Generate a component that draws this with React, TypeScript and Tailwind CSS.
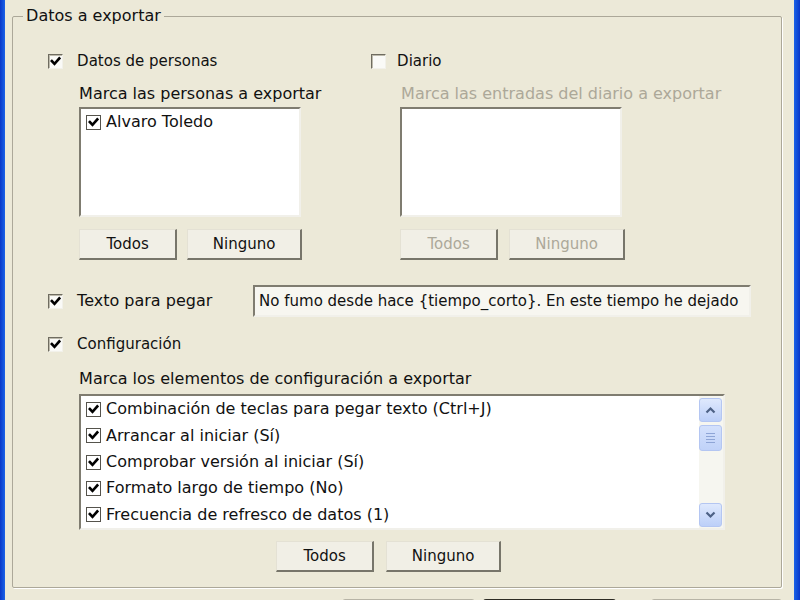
import React from 'react';

const FONT = { fontFamily: '"DejaVu Sans", "Liberation Sans", sans-serif' };

const Tick = () => (
  <svg width="11" height="11" viewBox="0 0 11 11">
    <path d="M1.8 5 L4.5 7.9 L9.3 2.4" stroke="#000" strokeWidth="2.6" fill="none" strokeLinecap="square" />
  </svg>
);

const CheckBox = ({ checked }: { checked?: boolean }) => (
  <span className="w-[15px] h-[15px] shrink-0 flex items-center justify-center bg-[#fafaf7] border border-t-[#6f6c60] border-l-[#6f6c60] border-r-[#f2f1ea] border-b-[#f2f1ea] shadow-[inset_1px_1px_0_#bdbaac]">
    {checked && <Tick />}
  </span>
);

const ItemBox = () => (
  <span className="w-[15px] h-[15px] shrink-0 flex items-center justify-center bg-white border border-[#55534c]">
    <Tick />
  </span>
);

const Button = ({ label, w, disabled }: { label: string; w: string; disabled?: boolean }) => (
  <button
    className={`${w} h-[31px] flex items-center justify-center bg-[#f1efe6] border-t border-l border-t-[#e4e1d4] border-l-[#e4e1d4] border-r-2 border-b-2 border-r-[#77756a] border-b-[#77756a] text-[15px] ${disabled ? 'text-[#aca899]' : 'text-[#111]'}`}
  >
    {label}
  </button>
);

const ListBox = ({ className, children }: { className: string; children?: React.ReactNode }) => (
  <div className={`${className} bg-white border-2 border-t-[#7f7c70] border-l-[#7f7c70] border-r-[#f1f0ea] border-b-[#f1f0ea]`}>
    {children}
  </div>
);

const configItems = [
  'Combinación de teclas para pegar texto (Ctrl+J)',
  'Arrancar al iniciar (Sí)',
  'Comprobar versión al iniciar (Sí)',
  'Formato largo de tiempo (No)',
  'Frecuencia de refresco de datos (1)',
];

const ScrollBtn = ({ up }: { up?: boolean }) => (
  <div className="w-[23px] h-[24px] rounded-[3px] bg-gradient-to-b from-[#dfe9fd] to-[#bccff8] border border-[#b4c6f2] flex items-center justify-center">
    <svg width="11" height="8" viewBox="0 0 11 8">
      <path d={up ? 'M1.5 6.5 L5.5 2.5 L9.5 6.5' : 'M1.5 1.5 L5.5 5.5 L9.5 1.5'} stroke="#4d6185" strokeWidth="2.2" fill="none" />
    </svg>
  </div>
);

export default function App() {
  return (
    <div className="w-[800px] h-[600px] bg-[#ece9d8] flex overflow-hidden text-[#111]" style={FONT}>
      <div className="w-[6px] h-full bg-gradient-to-r from-[#0a36c8] to-[#1c62e8]" />
      <div className="flex-1 flex flex-col pl-[7px] pr-[12px] pt-[6px]">
        <fieldset className="border border-[#aca899] rounded-[2px] shadow-[1px_1px_0_#fff]">
          <legend className="ml-[10px] px-[3px] text-[16px] leading-[20px] bg-[#ece9d8]">Datos a exportar</legend>

          <div className="pl-[35px] pr-[20px] pb-[15px]">
            <div className="flex mt-[25px]">
              <div className="w-[323px] flex flex-col">
                <div className="h-[20px] flex items-center gap-[14px] text-[15px]">
                  <CheckBox checked />
                  <span>Datos de personas</span>
                </div>
                <div className="ml-[31px] mt-[13px] text-[16px] leading-[20px]">Marca las personas a exportar</div>
                <ListBox className="ml-[31px] mt-[3px] w-[222px] h-[110px] pt-[3px] pl-[5px]">
                  <div className="h-[20px] flex items-center gap-[5px] text-[16px]">
                    <ItemBox />
                    <span>Alvaro Toledo</span>
                  </div>
                </ListBox>
                <div className="ml-[31px] mt-[12px] flex gap-[10px]">
                  <Button label="Todos" w="w-[98px]" />
                  <Button label="Ninguno" w="w-[115px]" />
                </div>
              </div>
              <div className="flex flex-col">
                <div className="h-[20px] flex items-center gap-[11px] text-[15px]">
                  <CheckBox />
                  <span>Diario</span>
                </div>
                <div className="ml-[30px] mt-[13px] text-[16px] leading-[20px] text-[#aca899]">
                  Marca las entradas del diario a exportar
                </div>
                <ListBox className="ml-[29px] mt-[3px] w-[222px] h-[110px]" />
                <div className="ml-[29px] mt-[12px] flex gap-[11px]">
                  <Button label="Todos" w="w-[98px]" disabled />
                  <Button label="Ninguno" w="w-[116px]" disabled />
                </div>
              </div>
            </div>

            <div className="flex items-center mt-[25px]">
              <div className="w-[205px] flex items-center gap-[14px] text-[16px]">
                <CheckBox checked />
                <span>Texto para pegar</span>
              </div>
              <div className="w-[498px] h-[32px] flex items-center pl-[4px] bg-[#f7f6f0] border-2 border-t-[#7f7c70] border-l-[#7f7c70] border-r-[#f1f0ea] border-b-[#f1f0ea] text-[15px] whitespace-nowrap overflow-hidden">
                No fumo desde hace {'{tiempo_corto}'}. En este tiempo he dejado
              </div>
            </div>

            <div className="h-[20px] mt-[17px] flex items-center gap-[14px] text-[15px]">
              <CheckBox checked />
              <span>Configuración</span>
            </div>
            <div className="ml-[31px] mt-[15px] text-[16px] leading-[20px]">Marca los elementos de configuración a exportar</div>
            <ListBox className="ml-[31px] mt-[5px] w-[646px] h-[136px] flex">
              <div className="flex-1 pl-[5px] flex flex-col">
                {configItems.map((t) => (
                  <div key={t} className="h-[26.5px] flex items-center gap-[5px] text-[16px] whitespace-nowrap">
                    <ItemBox />
                    <span>{t}</span>
                  </div>
                ))}
              </div>
              <div className="w-[24px] h-full flex flex-col justify-between bg-[#f6f6f0] pt-[2px] pb-[1px]">
                <ScrollBtn up />
                <div className="flex-1 pt-[3px]">
                  <div className="w-[23px] h-[26px] rounded-[3px] bg-gradient-to-b from-[#d4e1fc] to-[#c0d2f8] border border-[#b4c6f2] flex flex-col items-center justify-center gap-[2px]">
                    <span className="w-[9px] h-[1px] bg-[#8ea5d6]" />
                    <span className="w-[9px] h-[1px] bg-[#8ea5d6]" />
                    <span className="w-[9px] h-[1px] bg-[#8ea5d6]" />
                    <span className="w-[9px] h-[1px] bg-[#8ea5d6]" />
                  </div>
                </div>
                <ScrollBtn />
              </div>
            </ListBox>
            <div className="ml-[228px] mt-[11px] flex gap-[12px]">
              <Button label="Todos" w="w-[98px]" />
              <Button label="Ninguno" w="w-[115px]" />
            </div>
          </div>
        </fieldset>

        <div className="flex mt-[11px]">
          <div className="ml-[330px] w-[133px] h-[30px] bg-[#f7f6f1] border border-[#b7b4a6] rounded-[3px]" />
          <div className="ml-[8px] w-[133px] h-[30px] bg-[#2d2b24] rounded-[3px]" />
          <div className="ml-[35px] w-[131px] h-[30px] bg-[#f7f6f1] border border-[#b7b4a6] rounded-[3px]" />
        </div>
      </div>
      <div className="w-[7px] h-full bg-gradient-to-r from-[#1c62e8] to-[#0a36c8]" />
    </div>
  );
}
